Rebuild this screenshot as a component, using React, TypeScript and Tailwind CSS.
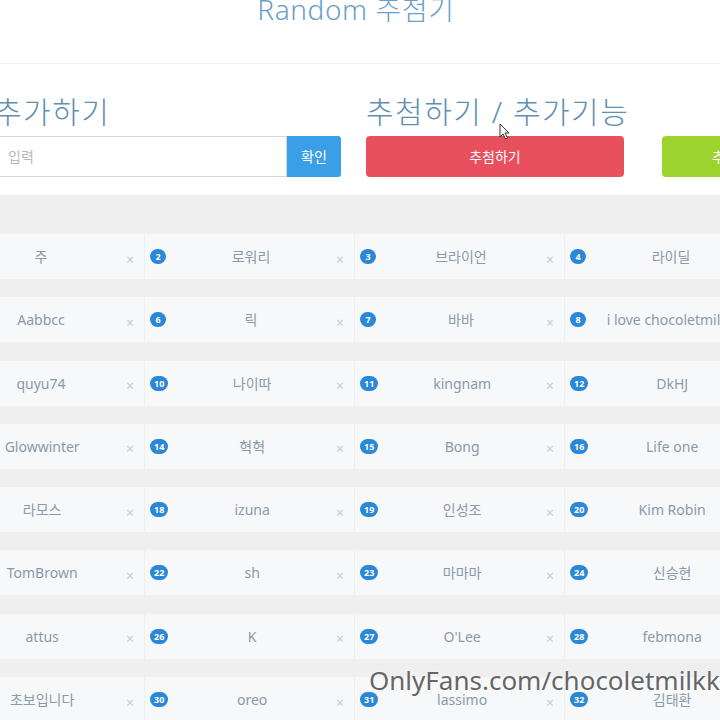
import React from "react";

const rows: string[][] = [
  ["주", "로워리", "브라이언", "라이딜"],
  ["Aabbcc", "릭", "바바", "i love chocoletmilkk"],
  ["quyu74", "나이따", "kingnam", "DkHJ"],
  ["Glowwinter", "혁혁", "Bong", "Life one"],
  ["라모스", "izuna", "인성조", "Kim Robin"],
  ["TomBrown", "sh", "마마마", "신승현"],
  ["attus", "K", "O'Lee", "febmona"],
  ["초보입니다", "oreo", "lassimo", "김태환"],
];

function Card({ n, name }: { n: number; name: string }) {
  return (
    <div className="h-[45px] bg-[#f7f8f9] flex items-center pl-[5px] pr-[10px] relative">
      <span className="h-[15px] min-w-[16px] px-[4px] rounded-full bg-[#2a88d6] text-white text-[9px] font-bold leading-[15px] text-center shrink-0">
        {n}
      </span>
      <span className="flex-1 text-center text-[14px] text-[#8a9aab] whitespace-nowrap">
        {name}
      </span>
      <span className="text-[14px] leading-[14px] text-[#c8ccd0] mt-[6px] shrink-0">×</span>
    </div>
  );
}

export default function App() {
  return (
    <div
      className="w-[720px] h-[720px] overflow-hidden bg-white relative"
      style={{ fontFamily: '"Noto Sans", "Noto Sans CJK KR", sans-serif' }}
    >
      {/* header */}
      <div className="h-[64px] border-b border-[#f1f1f1] flex justify-center pr-[8px]">
        <div className="text-[28px] leading-[30px] mt-[-6px] font-light tracking-[0.6px] text-[#6aa0c8]">Random 추첨기</div>
      </div>

      {/* controls */}
      <div className="ml-[-6px] flex gap-[25px] pb-[18px] w-[1200px]">
        <div className="w-[347px] shrink-0">
          <div className="text-[30px] leading-[36px] mt-[30px] font-light tracking-[1.5px] text-[#5f8fb2]">추가하기</div>
          <div className="mt-[6px] flex h-[41px]">
            <div className="flex-1 border border-[#d6d6d6] flex items-center pl-[13px] text-[14px] text-[#b8b8b8]">
              입력
            </div>
            <div className="w-[54px] bg-[#3a9fe6] rounded-r-[3px] flex items-center justify-center text-white text-[14px]">
              확인
            </div>
          </div>
        </div>
        <div className="shrink-0">
          <div className="text-[30px] leading-[36px] mt-[30px] font-light tracking-[1.5px] text-[#5f8fb2]">추첨하기 / 추가기능</div>
          <div className="mt-[6px] flex gap-[38px] h-[41px]">
            <div className="w-[258px] bg-[#e8505e] rounded-[4px] flex items-center justify-center text-white text-[14px]">
              추첨하기
            </div>
            <div className="w-[258px] bg-[#9dd32e] rounded-[4px] flex items-center pl-[50px] text-white text-[14px]">
              추가하기
            </div>
          </div>
        </div>
      </div>

      {/* list */}
      <div className="bg-[#efefef] pt-[39px] h-[600px]">
        <div className="ml-[-65px] grid grid-cols-[repeat(4,209px)] gap-x-[1px] gap-y-[18.3px] w-[900px]">
          {rows.map((r, i) =>
            r.map((name, j) => <Card key={`${i}-${j}`} n={i * 4 + j + 1} name={name} />)
          )}
        </div>
      </div>

      {/* mouse cursor */}
      <svg className="absolute left-[499px] top-[123px]" width="11" height="17" viewBox="0 0 11 17">
        <path d="M1 1 L1 14 L4 11 L6.5 16 L8.5 15 L6 10 L10 10 Z" fill="#fff" stroke="#333" strokeWidth="1" />
      </svg>

      {/* watermark */}
      <div className="absolute left-[369px] top-[663px] text-[26px] leading-[34px] text-[#666666] whitespace-nowrap [text-shadow:0_0_2px_#ffffff]">
        OnlyFans.com/chocoletmilkk
      </div>
    </div>
  );
}
